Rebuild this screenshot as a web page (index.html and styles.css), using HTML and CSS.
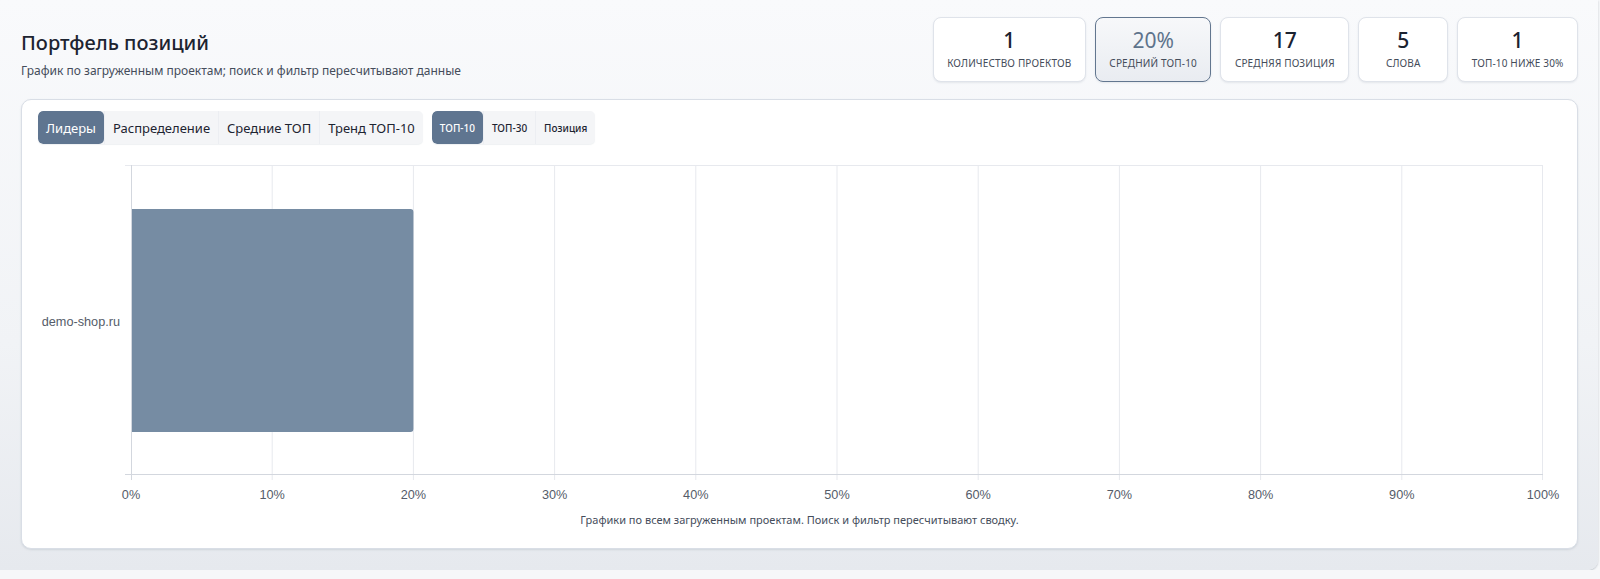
FILE: index.html
```html
<!DOCTYPE html>
<html lang="ru">
<head>
<meta charset="utf-8">
<title>Портфель позиций</title>
<link rel="stylesheet" href="styles.css">
</head>
<body>
<div class="panel">
  <div class="head">
    <div class="titles">
      <h1 class="title">Портфель позиций</h1>
      <p class="subtitle">График по загруженным проектам; поиск и фильтр пересчитывают данные</p>
    </div>
    <div class="stats">
      <div class="stat"><div class="stat-num">1</div><div class="stat-label">Количество проектов</div></div>
      <div class="stat stat-active"><div class="stat-num">20%</div><div class="stat-label">Средний ТОП-10</div></div>
      <div class="stat"><div class="stat-num">17</div><div class="stat-label">Средняя позиция</div></div>
      <div class="stat"><div class="stat-num">5</div><div class="stat-label">Слова</div></div>
      <div class="stat"><div class="stat-num">1</div><div class="stat-label">ТОП-10 ниже 30%</div></div>
    </div>
  </div>
  <div class="card">
    <div class="toolbar">
      <div class="tabs">
        <span class="tab tab-active">Лидеры</span>
        <span class="tab">Распределение</span>
        <span class="tab">Средние ТОП</span>
        <span class="tab">Тренд ТОП-10</span>
      </div>
      <div class="tabs tabs-small">
        <span class="tab tab-active">ТОП-10</span>
        <span class="tab">ТОП-30</span>
        <span class="tab">Позиция</span>
      </div>
    </div>
    <svg class="chart" width="1523" height="355" viewBox="0 0 1523 355">
      <g stroke="#e7e9ee" stroke-width="1">
        <line x1="87" y1="13.5" x2="1505" y2="13.5"/>
        <line x1="234.2" y1="13" x2="234.2" y2="328"/>
        <line x1="375.4" y1="13" x2="375.4" y2="328"/>
        <line x1="516.6" y1="13" x2="516.6" y2="328"/>
        <line x1="657.8" y1="13" x2="657.8" y2="328"/>
        <line x1="799" y1="13" x2="799" y2="328"/>
        <line x1="940.2" y1="13" x2="940.2" y2="328"/>
        <line x1="1081.4" y1="13" x2="1081.4" y2="328"/>
        <line x1="1222.6" y1="13" x2="1222.6" y2="328"/>
        <line x1="1363.8" y1="13" x2="1363.8" y2="328"/>
        <line x1="1504.5" y1="13" x2="1504.5" y2="328"/>
      </g>
      <path d="M93 57 H372.4 a3 3 0 0 1 3 3 V277 a3 3 0 0 1 -3 3 H93 Z" fill="#768ca3"/>
      <g stroke="#d3d7de" stroke-width="1">
        <line x1="93.5" y1="13" x2="93.5" y2="328"/>
        <line x1="87" y1="322.5" x2="1505" y2="322.5"/>
      </g>
      <g class="tick" text-anchor="middle">
        <text x="93" y="347">0%</text>
        <text x="234.2" y="347">10%</text>
        <text x="375.4" y="347">20%</text>
        <text x="516.6" y="347">30%</text>
        <text x="657.8" y="347">40%</text>
        <text x="799" y="347">50%</text>
        <text x="940.2" y="347">60%</text>
        <text x="1081.4" y="347">70%</text>
        <text x="1222.6" y="347">80%</text>
        <text x="1363.8" y="347">90%</text>
        <text x="1505" y="347">100%</text>
      </g>
      <text class="tick" x="82" y="174" text-anchor="end">demo-shop.ru</text>
    </svg>
    <p class="caption">Графики по всем загруженным проектам. Поиск и фильтр пересчитывают сводку.</p>
  </div>
</div>
</body>
</html>
```

FILE: styles.css
```css
* { box-sizing: border-box; }
html, body { margin: 0; padding: 0; background: #f6f7f9; }
body { font-family: "Noto Sans", "Open Sans", sans-serif; color: #1e2532; }

.panel {
  width: 1598px;
  height: 570px;
  padding: 17px 20px 0 21px;
  background: linear-gradient(180deg, #f9fafc 0%, #f1f3f6 60%, #e6e9ee 100%);
  border-radius: 0 0 10px 0;
  box-shadow: 0 1px 2px rgba(120, 130, 145, 0.45);
}

.head {
  display: flex;
  justify-content: space-between;
  align-items: flex-start;
  height: 82px;
}
.titles { padding-top: 13px; }
.title {
  margin: 0;
  font-size: 20px;
  line-height: 26px;
  font-weight: 500;
  color: #1d2431;
}
.subtitle {
  margin: 7px 0 0;
  font-size: 12px;
  line-height: 16px;
  color: #454d5b;
}

.stats { display: flex; gap: 9px; }
.stat {
  height: 65px;
  min-width: 90px;
  padding: 9px 13.5px 0;
  background: #fff;
  border: 1px solid #dfe3ea;
  border-radius: 8px;
  text-align: center;
  box-shadow: 0 1px 2px rgba(150, 160, 175, 0.2);
}
.stat-active {
  background: linear-gradient(180deg, #f7f8fa 0%, #e9ecf1 100%);
  border-color: #62768f;
}
.stat-num {
  font-size: 21px;
  line-height: 26px;
  font-weight: 500;
  color: #1b2230;
}
.stat-active .stat-num { color: #5e738c; font-weight: 400; }
.stat-label {
  margin-top: 3px;
  font-size: 10px;
  line-height: 14px;
  letter-spacing: 0.15px;
  text-transform: uppercase;
  color: #444c5a;
  white-space: nowrap;
}

.card {
  margin-top: 0;
  height: 450px;
  padding: 11px 16px 0;
  background: #fff;
  border: 1px solid #d9dee6;
  border-radius: 10px;
  box-shadow: 0 1px 2px rgba(140, 150, 165, 0.25);
}

.toolbar { display: flex; gap: 9px; height: 33px; }
.tabs {
  display: flex;
  background: #f4f5f7;
  border-radius: 5px;
  overflow: hidden;
  box-shadow: 0 1px 1px rgba(150, 160, 175, 0.15);
}
.tab {
  display: flex;
  align-items: center;
  padding: 0 8px;
  font-size: 13px;
  color: #1d2431;
  border-left: 1px solid #eceef2;
}
.tab:first-child { border-left: none; }
.tab-active {
  background: #5f7590;
  color: #fff;
  border-radius: 5px;
}
.tabs-small .tab { font-size: 10px; font-weight: 500; padding: 0 8px; }

.chart { display: block; margin-top: 8px; }
.tick {
  font-family: "Liberation Sans", Arial, sans-serif;
  font-size: 12.7px;
  fill: #555c69;
}

.caption {
  margin: 5px 0 0;
  text-align: center;
  font-size: 11px;
  line-height: 16px;
  color: #454d5b;
}
```
